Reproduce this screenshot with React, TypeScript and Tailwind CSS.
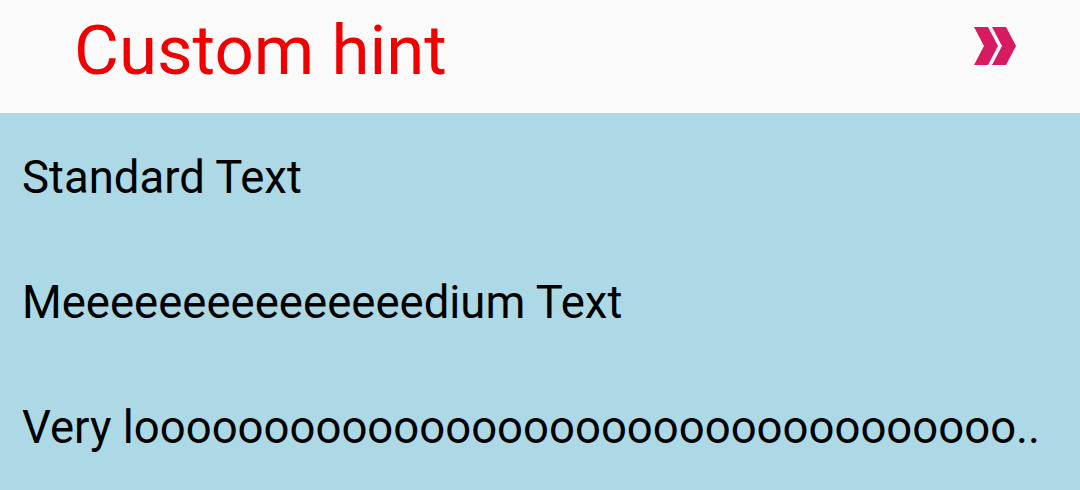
import React from "react";

const App = () => {
  return (
    <div className="w-[1080px] h-[490px] flex flex-col bg-[#add8e6] font-['Roboto',sans-serif] overflow-hidden">
      {/* HEADER */}
      <div className="h-[114px] bg-[#fafafa] flex items-center pl-[74px] pr-[62px]">
        <div className="flex-1 text-[69px] leading-none text-[#f00000] pb-[12px]">Custom hint</div>
        <svg width="44" height="38" viewBox="0 0 44 38" className="mb-[22px]">
          <path d="M0 0H14L24 19L14 38H0L10 19Z" fill="#d81b60" />
          <path d="M18 0H32L42 19L32 38H18L28 19Z" fill="#d81b60" />
        </svg>
      </div>
      {/* ROWS */}
      <div className="flex flex-col pl-[22px] pt-[2px] text-[45.5px] leading-[125px] text-black">
        <div className="h-[125px]">Standard Text</div>
        <div className="h-[125px]">Meeeeeeeeeeeeeeedium Text</div>
        <div className="h-[125px] whitespace-nowrap">Very loooooooooooooooooooooooooooooooooo..</div>
      </div>
    </div>
  );
};

export default App;
